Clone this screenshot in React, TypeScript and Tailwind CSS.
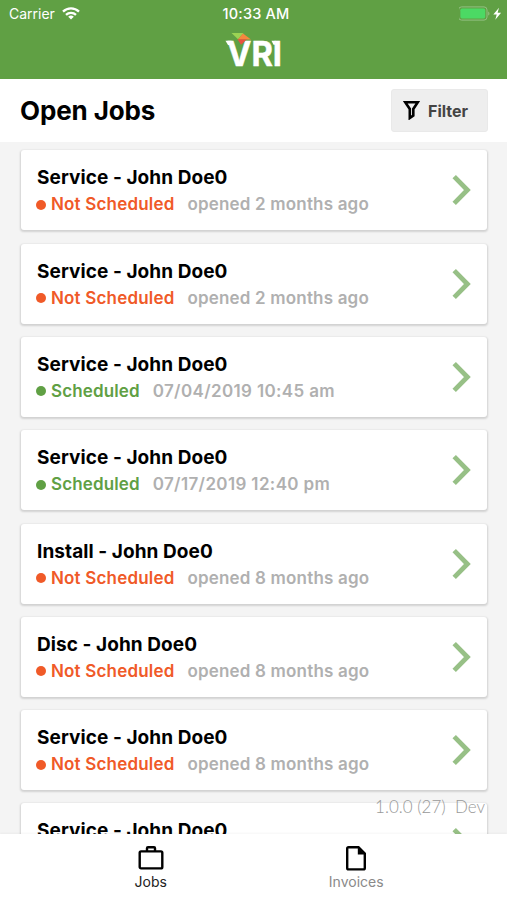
import { clsx } from 'clsx';

interface Job {
  title: string;
  scheduled: boolean;
  detail: string;
}

const jobs: Job[] = [
  { title: 'Service - John Doe0', scheduled: false, detail: 'opened 2 months ago' },
  { title: 'Service - John Doe0', scheduled: false, detail: 'opened 2 months ago' },
  { title: 'Service - John Doe0', scheduled: true, detail: '07/04/2019 10:45 am' },
  { title: 'Service - John Doe0', scheduled: true, detail: '07/17/2019 12:40 pm' },
  { title: 'Install - John Doe0', scheduled: false, detail: 'opened 8 months ago' },
  { title: 'Disc - John Doe0', scheduled: false, detail: 'opened 8 months ago' },
  { title: 'Service - John Doe0', scheduled: false, detail: 'opened 8 months ago' },
  { title: 'Service - John Doe0', scheduled: false, detail: 'opened 8 months ago' },
];

function WifiIcon() {
  return (
    <svg width="18" height="13" viewBox="0 0 18 13" fill="none" stroke="white" strokeWidth="2.3">
      <path d="M1 4.6a11.4 11.4 0 0 1 16 0" />
      <path d="M4 7.9a7.2 7.2 0 0 1 10 0" />
      <path d="M9 12.6 6.2 9.8a4 4 0 0 1 5.6 0z" fill="white" stroke="none" />
    </svg>
  );
}

function BatteryIcon() {
  return (
    <svg width="44" height="15" viewBox="0 0 44 15">
      <rect x="-0.5" y="0.9" width="28.5" height="13.2" rx="3" fill="none" stroke="#93bf83" />
      <rect x="1.4" y="2.6" width="24.8" height="9.8" rx="1.6" fill="#4cd964" />
      <path d="M29.2 5.4c1.7.6 1.7 3.6 0 4.2z" fill="#93bf83" />
      <path d="M40 1.8 34.3 8.4h3.4l-1.4 5.4 5.8-7h-3.5z" fill="white" />
    </svg>
  );
}

function Logo() {
  return (
    <svg width="60" height="38" viewBox="0 0 60 38" overflow="visible">
      <text
        x="3"
        y="33"
        textLength="55"
        lengthAdjust="spacingAndGlyphs"
        className="font-['Inter',sans-serif] text-[34.5px] leading-none font-bold"
        fill="white"
        stroke="white"
        strokeWidth="0.5"
      >
        VRI
      </text>
      <path d="M1.5 7.7h6v4.2H4z" fill="white" />
      <path d="M47.5 7.7h4v4h-2z" fill="white" />
      <path d="M7.5 0h12L14 6.2z" fill="#9bd354" />
      <path d="m19 0.4 8 6H13.8z" fill="#f4883f" />
      <path d="M13.5 6.2h9.5l-6 5.6z" fill="#e8533f" />
    </svg>
  );
}

function Header() {
  return (
    <header className="flex h-[79px] shrink-0 flex-col bg-[#60a044] text-white">
      <div className="grid h-[27px] grid-cols-3 items-center pr-1 pl-[9px] text-[14px]">
        <div className="flex items-center gap-[7px]">
          <span>Carrier</span>
          <WifiIcon />
        </div>
        <span className="text-center text-[14.5px] font-medium tracking-[0.2px] whitespace-nowrap">10:33 AM</span>
        <div className="flex justify-end">
          <BatteryIcon />
        </div>
      </div>
      <div className="flex justify-center pt-[6px]">
        <Logo />
      </div>
    </header>
  );
}

function JobCard({ job }: { job: Job }) {
  return (
    <div className="flex h-[80px] shrink-0 items-center justify-between rounded-[3px] bg-white px-4 shadow-[0_1px_2px_1px_rgba(0,0,0,0.14)]">
      <div className="pt-[2px]">
        <div className="text-[19px] leading-[27px] font-bold tracking-[0.07px] text-black">{job.title}</div>
        <div className="flex items-center text-[17px] leading-[27px] font-semibold">
          <span
            className={clsx('mr-[5px] -ml-px size-[10px] rounded-full', job.scheduled ? 'bg-[#60a044]' : 'bg-[#f05a28]')}
          />
          <span className={clsx(job.scheduled ? 'tracking-[0.13px] text-[#60a044]' : 'tracking-[0.18px] text-[#f05a28]')}>
            {job.scheduled ? 'Scheduled' : 'Not Scheduled'}
          </span>
          <span className={clsx('ml-[13px] text-[#b0b0b0]', job.scheduled ? 'tracking-[0.36px]' : 'tracking-[0.18px]')}>
            {job.detail}
          </span>
        </div>
      </div>
      <svg width="20" height="32" viewBox="0 0 20 32" fill="none" stroke="#97c086" strokeWidth="4.8">
        <path d="M3.2 2.6 16.4 16 3.2 29.4" />
      </svg>
    </div>
  );
}

function TabBar() {
  return (
    <nav className="relative z-10 flex h-[66px] shrink-0 justify-around bg-white px-12 pt-[11px] text-[14px] leading-[18px] shadow-[0_-1px_2px_rgba(0,0,0,0.04)]">
      <div className="flex w-24 flex-col items-center text-[#222222]">
        <svg width="28" height="28" viewBox="0 0 28 28" fill="none" stroke="black" strokeWidth="2.4">
          <rect x="2.7" y="6.4" width="22.6" height="17" rx="1.4" />
          <path d="M10 6.4V3.2a1 1 0 0 1 1-1h6a1 1 0 0 1 1 1v3.2" />
        </svg>
        <span>Jobs</span>
      </div>
      <div className="flex w-24 flex-col items-center text-[#8a8a8a]">
        <svg width="28" height="28" viewBox="0 0 28 28" fill="none" stroke="black" strokeWidth="2.4">
          <path d="M16.5 2.2H6.6a1.4 1.4 0 0 0-1.4 1.4v19.4a1.4 1.4 0 0 0 1.4 1.4h14.8a1.4 1.4 0 0 0 1.4-1.4V8.6z" />
          <path d="M15.8 2.2V9.6h7z" fill="black" stroke="none" />
        </svg>
        <span>Invoices</span>
      </div>
    </nav>
  );
}

export default function App() {
  return (
    <div className="flex h-[900px] w-[507px] flex-col overflow-hidden bg-[#f4f4f4] font-['Inter',sans-serif]">
      <Header />
      <div className="flex h-[63px] shrink-0 items-center justify-between bg-white pr-[19px] pl-5">
        <h1 className="text-[26px] font-bold tracking-[-0.12px] text-black">Open Jobs</h1>
        <button className="flex h-[43px] w-[97px] items-center rounded-[3px] border border-[#e9e9e9] bg-[#eeeeee] pl-[11px] text-[16px] font-bold text-[#444444]">
          <svg className="mr-[8px] -mt-0.5" width="17" height="20" viewBox="0 0 17 20" fill="none" stroke="black" strokeWidth="2.6">
            <path d="M2.2 2.2h12.6L10.3 9v6.6L6.8 18V9z" />
          </svg>
          <span className="pt-px">Filter</span>
        </button>
      </div>
      <main className="relative flex min-h-0 flex-1 flex-col gap-[13.3px] overflow-hidden pr-5 pl-[21px] pt-[8.4px]">
        {jobs.map((job, index) => (
          <JobCard key={index} job={job} />
        ))}
        <div className="absolute right-[22px] bottom-[17px] font-['Lato',sans-serif] text-[17px] leading-5 font-light whitespace-pre text-[#999999]">
          1.0.0 (27)  Dev
        </div>
      </main>
      <TabBar />
    </div>
  );
}
